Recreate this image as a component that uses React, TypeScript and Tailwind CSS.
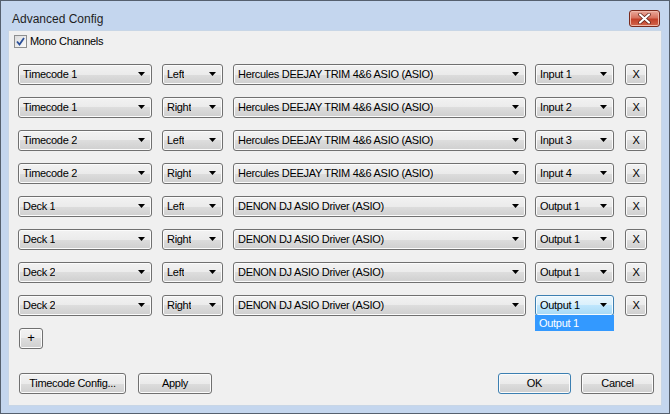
import { FC } from 'react';

const rows = [
    { src: 'Timecode 1', side: 'Left', dev: 'Hercules DEEJAY TRIM 4&6 ASIO (ASIO)', ch: 'Input 1' },
    { src: 'Timecode 1', side: 'Right', dev: 'Hercules DEEJAY TRIM 4&6 ASIO (ASIO)', ch: 'Input 2' },
    { src: 'Timecode 2', side: 'Left', dev: 'Hercules DEEJAY TRIM 4&6 ASIO (ASIO)', ch: 'Input 3' },
    { src: 'Timecode 2', side: 'Right', dev: 'Hercules DEEJAY TRIM 4&6 ASIO (ASIO)', ch: 'Input 4' },
    { src: 'Deck 1', side: 'Left', dev: 'DENON DJ ASIO Driver (ASIO)', ch: 'Output 1' },
    { src: 'Deck 1', side: 'Right', dev: 'DENON DJ ASIO Driver (ASIO)', ch: 'Output 1' },
    { src: 'Deck 2', side: 'Left', dev: 'DENON DJ ASIO Driver (ASIO)', ch: 'Output 1' },
    { src: 'Deck 2', side: 'Right', dev: 'DENON DJ ASIO Driver (ASIO)', ch: 'Output 1' },
];

const face =
    'bg-[linear-gradient(to_bottom,#f2f2f2_0%,#ebebeb_50%,#dddddd_50%,#cfcfcf_100%)] shadow-[inset_0_0_0_1px_#fbfbfb]';

const Combo: FC<{ text: string; className: string; focused?: boolean }> = ({ text, className, focused }) => (
    <div
        className={`h-[21px] shrink-0 rounded-[3px] border flex items-center justify-between pl-[4px] pr-[6px] ${className} ${
            focused
                ? 'border-[#3c7fb1] bg-[linear-gradient(to_bottom,#eaf6fd_0%,#d9f0fc_50%,#bee6fd_50%,#a7d9f5_100%)] shadow-[inset_0_0_0_1px_#f4fbff]'
                : `border-[#707070] ${face}`
        }`}
    >
        <span className="truncate">{text}</span>
        <svg width="7" height="4" viewBox="0 0 7 4" className="shrink-0">
            <polygon points="0,0 7,0 3.5,4" fill="#000" />
        </svg>
    </div>
);

const Btn: FC<{ label: string; className: string; def?: boolean }> = ({ label, className, def }) => (
    <div
        className={`h-[21px] rounded-[3px] border flex items-center justify-center ${face} ${className} ${
            def ? 'border-[#3c7fb1] shadow-[inset_0_0_0_1px_#7fd6f8]' : 'border-[#707070]'
        }`}
    >
        {label}
    </div>
);

export default function App() {
    return (
        <div
            className="w-[670px] h-[414px] border border-[#55606e] bg-[#c4d6ee] flex flex-col px-[7px] pb-[7px] text-[11px] tracking-[-0.3px] text-black"
            style={{ fontFamily: '"Liberation Sans", Arial, sans-serif' }}
        >
            <div className="h-[29px] shrink-0 flex items-start justify-between">
                <div className="pl-[4px] pt-[9px] text-[12px] tracking-normal text-[#1e1e1e]">Advanced Config</div>
                <div className="mt-[9px] mr-[2px] w-[31px] h-[17px] rounded-[3px] border border-[#7a2a1c] bg-[linear-gradient(to_bottom,#e9a99b_0%,#d8735f_45%,#c2412a_55%,#d2664d_100%)] shadow-[inset_0_0_0_1px_#f0b8aa] flex items-center justify-center">
                    <svg width="13" height="11" viewBox="0 0 13 11">
                        <path d="M2 1.5 L11 9.5 M11 1.5 L2 9.5" stroke="#5a1e14" strokeWidth="3.6" strokeLinecap="round" />
                        <path d="M2 1.5 L11 9.5 M11 1.5 L2 9.5" stroke="#fff" strokeWidth="2.2" strokeLinecap="round" />
                    </svg>
                </div>
            </div>
            <div className="flex-1 bg-[#f0f0f0] border border-[#c8d6e6] flex flex-col pl-[9px] pr-[7px] pb-[11px]">
                <label className="flex items-center gap-[3px] mt-[2px] ml-[-4px]">
                    <span className="w-[13px] h-[13px] border border-[#8e8f8f] bg-[linear-gradient(to_bottom_right,#dcdcdc,#fafafa)] flex items-center justify-center">
                        <svg width="9" height="9" viewBox="0 0 9 9">
                            <path d="M1 4.5 L3.5 7.5 L8 1" stroke="#2a4f99" strokeWidth="1.8" fill="none" />
                        </svg>
                    </span>
                    Mono Channels
                </label>
                <div className="flex flex-col gap-[12px] mt-[14px]">
                    {rows.map((r, i) => (
                        <div key={i} className="flex items-center">
                            <Combo text={r.src} className="w-[134px]" />
                            <Combo text={r.side} className="w-[61px] ml-[10px]" />
                            <Combo text={r.dev} className="w-[293px] ml-[10px]" />
                            <div className="relative ml-[9px]">
                                <Combo text={r.ch} className="w-[79px]" focused={i === rows.length - 1} />
                                {i === rows.length - 1 && (
                                    <div className="absolute left-0 top-[20px] w-[79px] h-[16px] bg-[#3399ff] border border-[#3399ff] text-white pl-[3px] leading-[14px]">
                                        Output 1
                                    </div>
                                )}
                            </div>
                            <Btn label="X" className="w-[22px] ml-[11px]" />
                        </div>
                    ))}
                </div>
                <Btn label="+" className="w-[24px] h-[20px] mt-[12px] ml-[1px] text-[13px]" />
                <div className="mt-auto flex items-center">
                    <Btn label="Timecode Config..." className="w-[107px] ml-[1px]" />
                    <Btn label="Apply" className="w-[74px] ml-[12px]" />
                    <Btn label="OK" className="w-[73px] ml-auto" def />
                    <Btn label="Cancel" className="w-[73px] ml-[10px]" />
                </div>
            </div>
        </div>
    );
}
